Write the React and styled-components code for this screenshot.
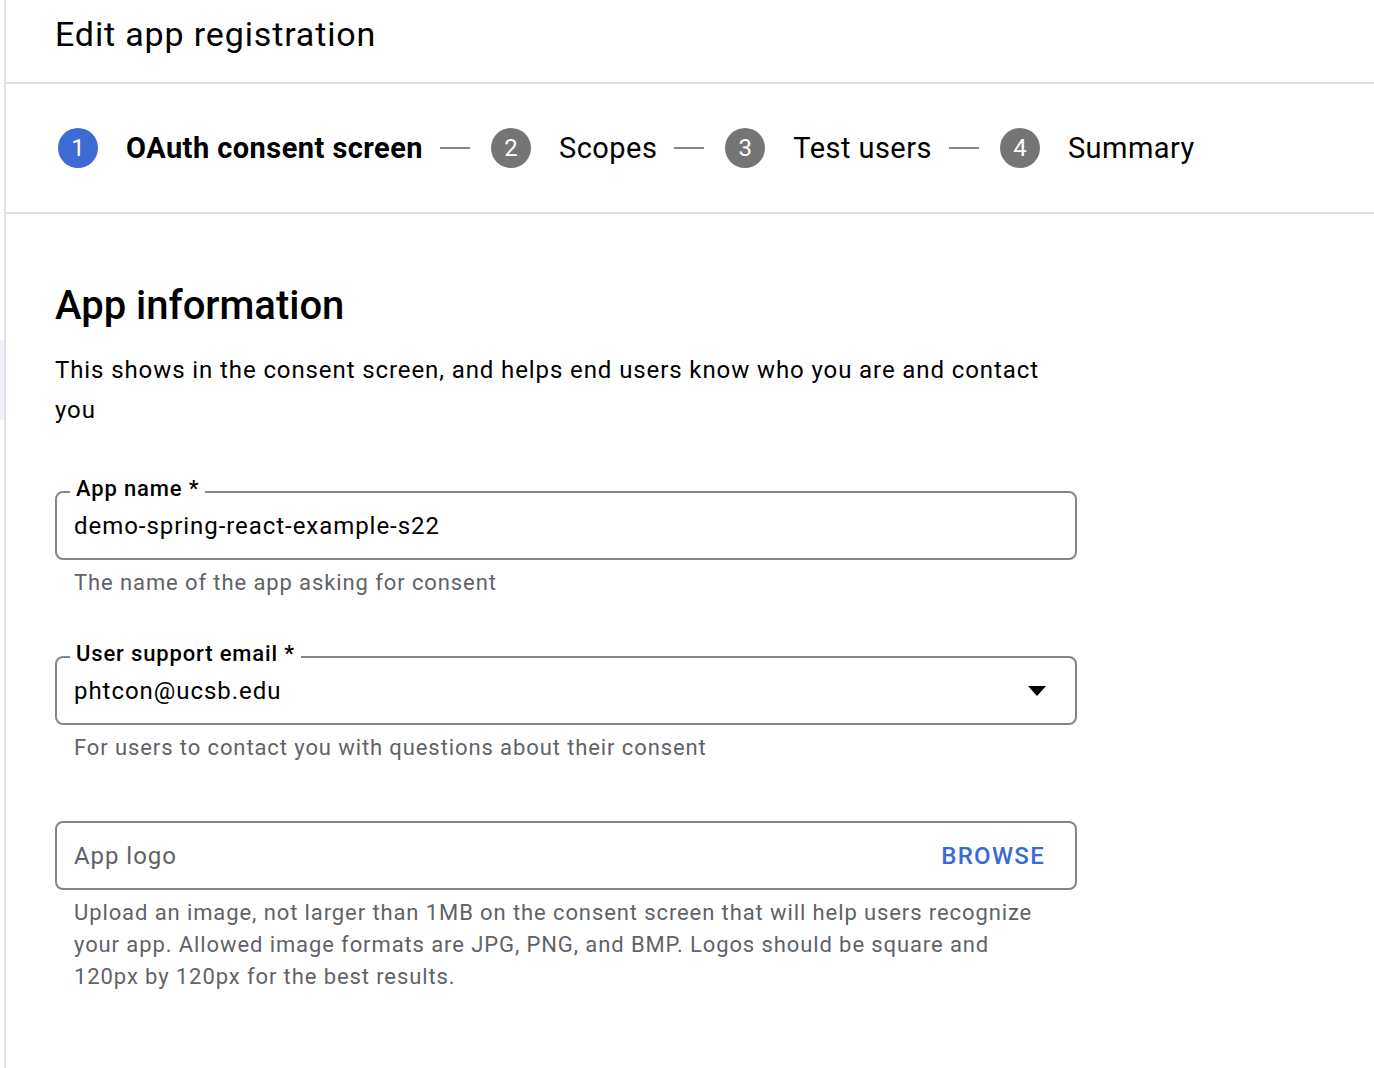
import React from "react";
import styled, { createGlobalStyle } from "styled-components";

const GlobalStyle = createGlobalStyle`
  html, body {
    margin: 0;
    padding: 0;
    background: #fff;
  }
  body {
    font-family: Roboto, "Liberation Sans", Arial, sans-serif;
    color: #202124;
  }
`;

const Page = styled.div`
  display: flex;
  min-height: 100vh;
  background: #fff;
`;

const SideRail = styled.div`
  width: 4px;
  flex-shrink: 0;
  display: flex;
  flex-direction: column;
`;

const RailItem = styled.div`
  margin-top: ${(p) => p.offset}px;
  height: ${(p) => p.size}px;
  background: #eef3fc;
`;

const Main = styled.main`
  flex: 1;
  border-left: 2px solid #e0e0e0;
  min-width: 0;
`;

const Header = styled.header`
  height: 84px;
  box-sizing: border-box;
  padding: 14px 0 0 49px;
  border-bottom: 2px solid #e0e0e0;
`;

const Title = styled.h1`
  margin: 0;
  font-size: 34px;
  line-height: 40px;
  font-weight: 400;
  letter-spacing: 0.85px;
  color: #000;
`;

const Stepper = styled.nav`
  height: 130px;
  box-sizing: border-box;
  border-bottom: 2px solid #e0e0e0;
  display: flex;
  align-items: center;
  padding-left: 52px;
`;

const Step = styled.div`
  display: flex;
  align-items: center;
  gap: 28px;
`;

const StepNumber = styled.span`
  width: 40px;
  height: 40px;
  border-radius: 50%;
  background: ${(p) => (p.active ? "#3e6ad4" : "#757575")};
  color: #fff;
  font-size: 24px;
  display: flex;
  align-items: center;
  justify-content: center;
  flex-shrink: 0;
`;

const StepLabel = styled.span`
  font-size: 29px;
  line-height: 40px;
  letter-spacing: 0.45px;
  font-weight: ${(p) => (p.active ? 700 : 400)};
  color: #000;
`;

const Connector = styled.span`
  width: 30px;
  height: 2px;
  background: #80868b;
  margin: 0 21px 0 17px;
`;

const Form = styled.section`
  width: 1022px;
  padding: 68px 0 60px 49px;
`;

const Heading = styled.h2`
  margin: 0;
  font-size: 40px;
  line-height: 48px;
  font-weight: 500;
  color: #000;
`;

const Intro = styled.p`
  margin: 20px 0 61px;
  font-size: 24px;
  line-height: 40px;
  letter-spacing: 0.9px;
  color: #000;
`;

const FieldGroup = styled.div`
  margin-bottom: 57px;
`;

const Box = styled.div`
  position: relative;
  height: 69px;
  box-sizing: border-box;
  border: 2px solid #80868b;
  border-radius: 8px;
  display: flex;
  align-items: center;
  padding: 0 29px 0 17px;
`;

const FloatingLabel = styled.label`
  position: absolute;
  left: 13px;
  top: -17px;
  padding: 0 6px;
  background: #fff;
  font-size: 22px;
  line-height: 26px;
  font-weight: 500;
  letter-spacing: 0.85px;
  color: #000;
`;

const Value = styled.span`
  flex: 1;
  font-size: 24px;
  letter-spacing: 0.95px;
  color: ${(p) => (p.placeholder ? "#5f6368" : "#000")};
`;

const Caret = styled.span`
  width: 0;
  height: 0;
  border-left: 9px solid transparent;
  border-right: 9px solid transparent;
  border-top: 10px solid #000;
`;

const Browse = styled.span`
  font-size: 24px;
  font-weight: 500;
  letter-spacing: 1.3px;
  color: #3a6bd4;
  margin-right: 1px;
`;

const Helper = styled.p`
  margin: 7px 0 0;
  padding: 0 19px;
  font-size: 22px;
  line-height: 32px;
  letter-spacing: 0.9px;
  color: #5f6368;
`;

const steps = [
  { n: 1, label: "OAuth consent screen", active: true },
  { n: 2, label: "Scopes" },
  { n: 3, label: "Test users" },
  { n: 4, label: "Summary" },
];

const App = () => {
  return (
    <>
      <GlobalStyle />
      <Page>
        <SideRail>
          <RailItem offset={340} size={80} />
        </SideRail>
        <Main>
          <Header>
            <Title>Edit app registration</Title>
          </Header>
          <Stepper>
            {steps.map((s, i) => (
              <React.Fragment key={s.n}>
                {i > 0 && <Connector />}
                <Step>
                  <StepNumber active={s.active}>{s.n}</StepNumber>
                  <StepLabel active={s.active}>{s.label}</StepLabel>
                </Step>
              </React.Fragment>
            ))}
          </Stepper>
          <Form>
            <Heading>App information</Heading>
            <Intro>
              This shows in the consent screen, and helps end users know who you are and contact you
            </Intro>

            <FieldGroup>
              <Box>
                <FloatingLabel>App name *</FloatingLabel>
                <Value>demo-spring-react-example-s22</Value>
              </Box>
              <Helper>The name of the app asking for consent</Helper>
            </FieldGroup>

            <FieldGroup>
              <Box>
                <FloatingLabel>User support email *</FloatingLabel>
                <Value>phtcon@ucsb.edu</Value>
                <Caret />
              </Box>
              <Helper>For users to contact you with questions about their consent</Helper>
            </FieldGroup>

            <FieldGroup>
              <Box>
                <Value placeholder>App logo</Value>
                <Browse>BROWSE</Browse>
              </Box>
              <Helper>
                Upload an image, not larger than 1MB on the consent screen that will help users recognize
                your app. Allowed image formats are JPG, PNG, and BMP. Logos should be square and
                120px by 120px for the best results.
              </Helper>
            </FieldGroup>
          </Form>
        </Main>
      </Page>
    </>
  );
};

export default App;
